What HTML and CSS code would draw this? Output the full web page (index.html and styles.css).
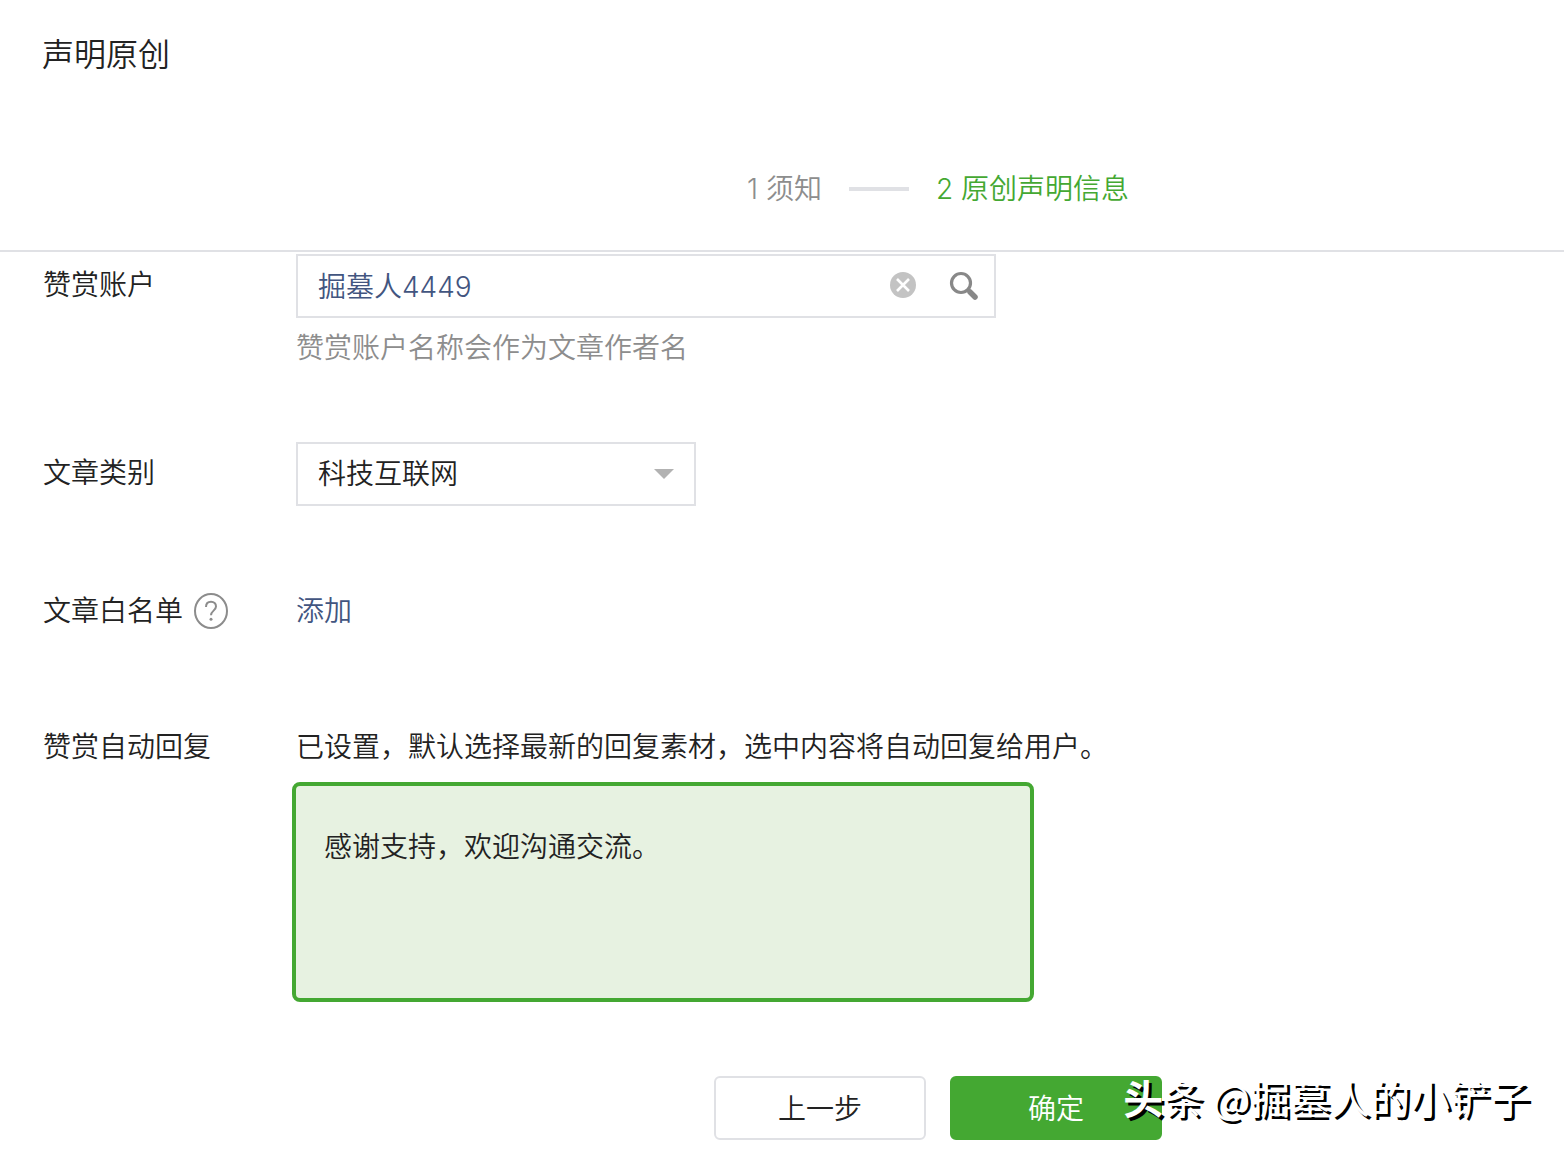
FILE: index.html
```
<!DOCTYPE html>
<html lang="zh-CN">
<head>
    <meta charset="UTF-8">
    <meta name="viewport" content="width=device-width, initial-scale=1">
    <title>声明原创</title>
    <link rel="stylesheet" href="styles.css">
</head>
<body>
    <main class="dialog">
        <header class="dialog-header">
            <h1 class="title">声明原创</h1>
            <ol class="steps">
                <li class="step">1 须知</li>
                <li class="step-line" aria-hidden="true"></li>
                <li class="step active">2 原创声明信息</li>
            </ol>
        </header>

        <form class="form">
            <div class="row">
                <label class="label" for="account">赞赏账户</label>
                <div class="field">
                    <div class="account-box">
                        <input class="account-input" id="account" type="text" value="掘墓人4449">
                        <button class="icon-btn" type="button" aria-label="清除">
                            <svg width="28" height="28" viewBox="0 0 28 28">
                                <circle cx="13" cy="13" r="13" fill="#c3c3c3"/>
                                <path d="M7 7l12 12M19 7l-12 12" stroke="#fff" stroke-width="2.600"/>
                            </svg>
                        </button>
                        <button class="icon-btn" type="button" aria-label="搜索">
                            <svg width="32" height="32" viewBox="0 0 32 32" fill="none" stroke="#888">
                                <circle cx="13" cy="13" r="9.500" stroke-width="3.200"/>
                                <path d="M19.500 19.500l3 3" stroke-width="3"/>
                                <path d="M22 22l5 5" stroke-width="5.500" stroke-linecap="round"/>
                            </svg>
                        </button>
                    </div>
                    <p class="hint">赞赏账户名称会作为文章作者名</p>
                </div>
            </div>

            <div class="row">
                <label class="label" for="category">文章类别</label>
                <div class="field">
                    <div class="select-box">
                        <select class="select" id="category">
                            <option>科技互联网</option>
                        </select>
                        <svg class="arrow" width="20" height="10" viewBox="0 0 20 10">
                            <path d="M0 0h20L10 10z" fill="#b2b2b2"/>
                        </svg>
                    </div>
                </div>
            </div>

            <div class="row">
                <div class="label">
                    <span>文章白名单</span>
                    <svg class="help" width="36" height="36" viewBox="0 0 36 36" fill="none" stroke="#8c8c8c" stroke-width="2">
                        <ellipse cx="18" cy="18" rx="16" ry="17"/>
                        <path d="M13 14c0-3.300 2-5.300 5-5.300s5 2 5 4.800c0 4-5 4.300-5 8.700"/>
                        <circle cx="18" cy="26.200" r="1.500" fill="#8c8c8c" stroke="none"/>
                    </svg>
                </div>
                <div class="field">
                    <a class="link" href="#">添加</a>
                </div>
            </div>

            <div class="row">
                <div class="label">赞赏自动回复</div>
                <div class="field">
                    <p class="text">已设置，默认选择最新的回复素材，选中内容将自动回复给用户。</p>
                    <button class="reply" type="button" aria-pressed="true">感谢支持，欢迎沟通交流。</button>
                </div>
            </div>
        </form>

        <footer class="dialog-footer">
            <button class="btn" type="button">上一步</button>
            <button class="btn primary" type="button">确定</button>
        </footer>

        <div class="watermark"><b>头</b>条 @掘墓人的小铲子</div>
    </main>
</body>
</html>
```
FILE: styles.css
```
* {
    box-sizing: border-box;
}
body {
    margin: 0;
    background: #fff;
    color: #222;
    font-family: Inter, "Noto Sans CJK SC", sans-serif;
    font-size: 28px;
    font-weight: 350;
    line-height: 62px;
}
h1, p, ol {
    margin: 0;
    padding: 0;
}
button, input, select {
    font: inherit;
    color: inherit;
}
.dialog {
    position: relative;
    min-height: 100vh;
}
.dialog-header {
    padding-top: 24px;
    border-bottom: 2px solid #e0e1e5;
}
.title {
    padding-left: 42px;
    font-size: 32px;
    font-weight: 350;
}

/* steps and footer share the same centre */
.steps,
.dialog-footer {
    display: flex;
    justify-content: center;
    align-items: center;
    padding-left: 312px;
}
.steps {
    gap: 27px;
    margin-top: 72px;
    padding-bottom: 30px;
    list-style: none;
    color: #8d8d8d;
}
.step-line {
    width: 60px;
    height: 4px;
    background: #e0e1e5;
}
.step.active {
    color: #44a832;
}

.form {
    display: flex;
    flex-direction: column;
    gap: 74px;
    padding: 2px 43px 0;
}
.row {
    display: flex;
}
.label {
    display: flex;
    align-items: center;
    gap: 10px;
    flex: 0 0 253px;
    height: 62px;
}
.field {
    flex: 1;
}
.account-box {
    display: flex;
    align-items: center;
    gap: 30px;
    max-width: 700px;
    height: 64px;
    padding: 0 14px 0 20px;
    border: 2px solid #e0e1e5;
}
.account-input {
    flex: 1;
    min-width: 0;
    padding: 2px 0 0;
    border: 0;
    outline: 0;
    background: none;
    color: #42557f;
}
.icon-btn {
    display: flex;
    padding: 0;
    border: 0;
    background: none;
}
.hint {
    margin-top: 10px;
    color: #8d8d8d;
    line-height: 40px;
}
.select-box {
    display: grid;
    align-items: center;
    max-width: 400px;
}
.select {
    grid-area: 1 / 1;
    height: 64px;
    padding: 0 20px;
    border: 2px solid #e0e1e5;
    border-radius: 0;
    background: #fff;
    line-height: 60px;
    appearance: none;
}
.arrow {
    grid-area: 1 / 1;
    justify-self: end;
    margin-right: 22px;
    pointer-events: none;
}
.link {
    color: #42557f;
    text-decoration: none;
}
.reply {
    display: flex;
    width: calc(100% + 8px);
    max-width: 742px;
    height: 220px;
    margin: 4px -4px 0;
    padding: 30px 28px;
    border: 4px solid #44a832;
    border-radius: 8px;
    background: #e7f2e1;
    text-align: left;
}

.dialog-footer {
    gap: 24px;
    margin-top: 74px;
}
.btn {
    width: 212px;
    height: 64px;
    padding: 0;
    border: 2px solid #e0e1e5;
    border-radius: 6px;
    background: #fff;
}
.btn.primary {
    border-color: #44a832;
    background: #44a832;
    color: #fff;
}
.watermark {
    position: absolute;
    right: 34px;
    bottom: 26px;
    color: #fff;
    font-family: "Noto Sans CJK SC", sans-serif;
    font-size: 40px;
    font-weight: 400;
    text-shadow: 3px 3px 0 #000;
    pointer-events: none;
}
```
